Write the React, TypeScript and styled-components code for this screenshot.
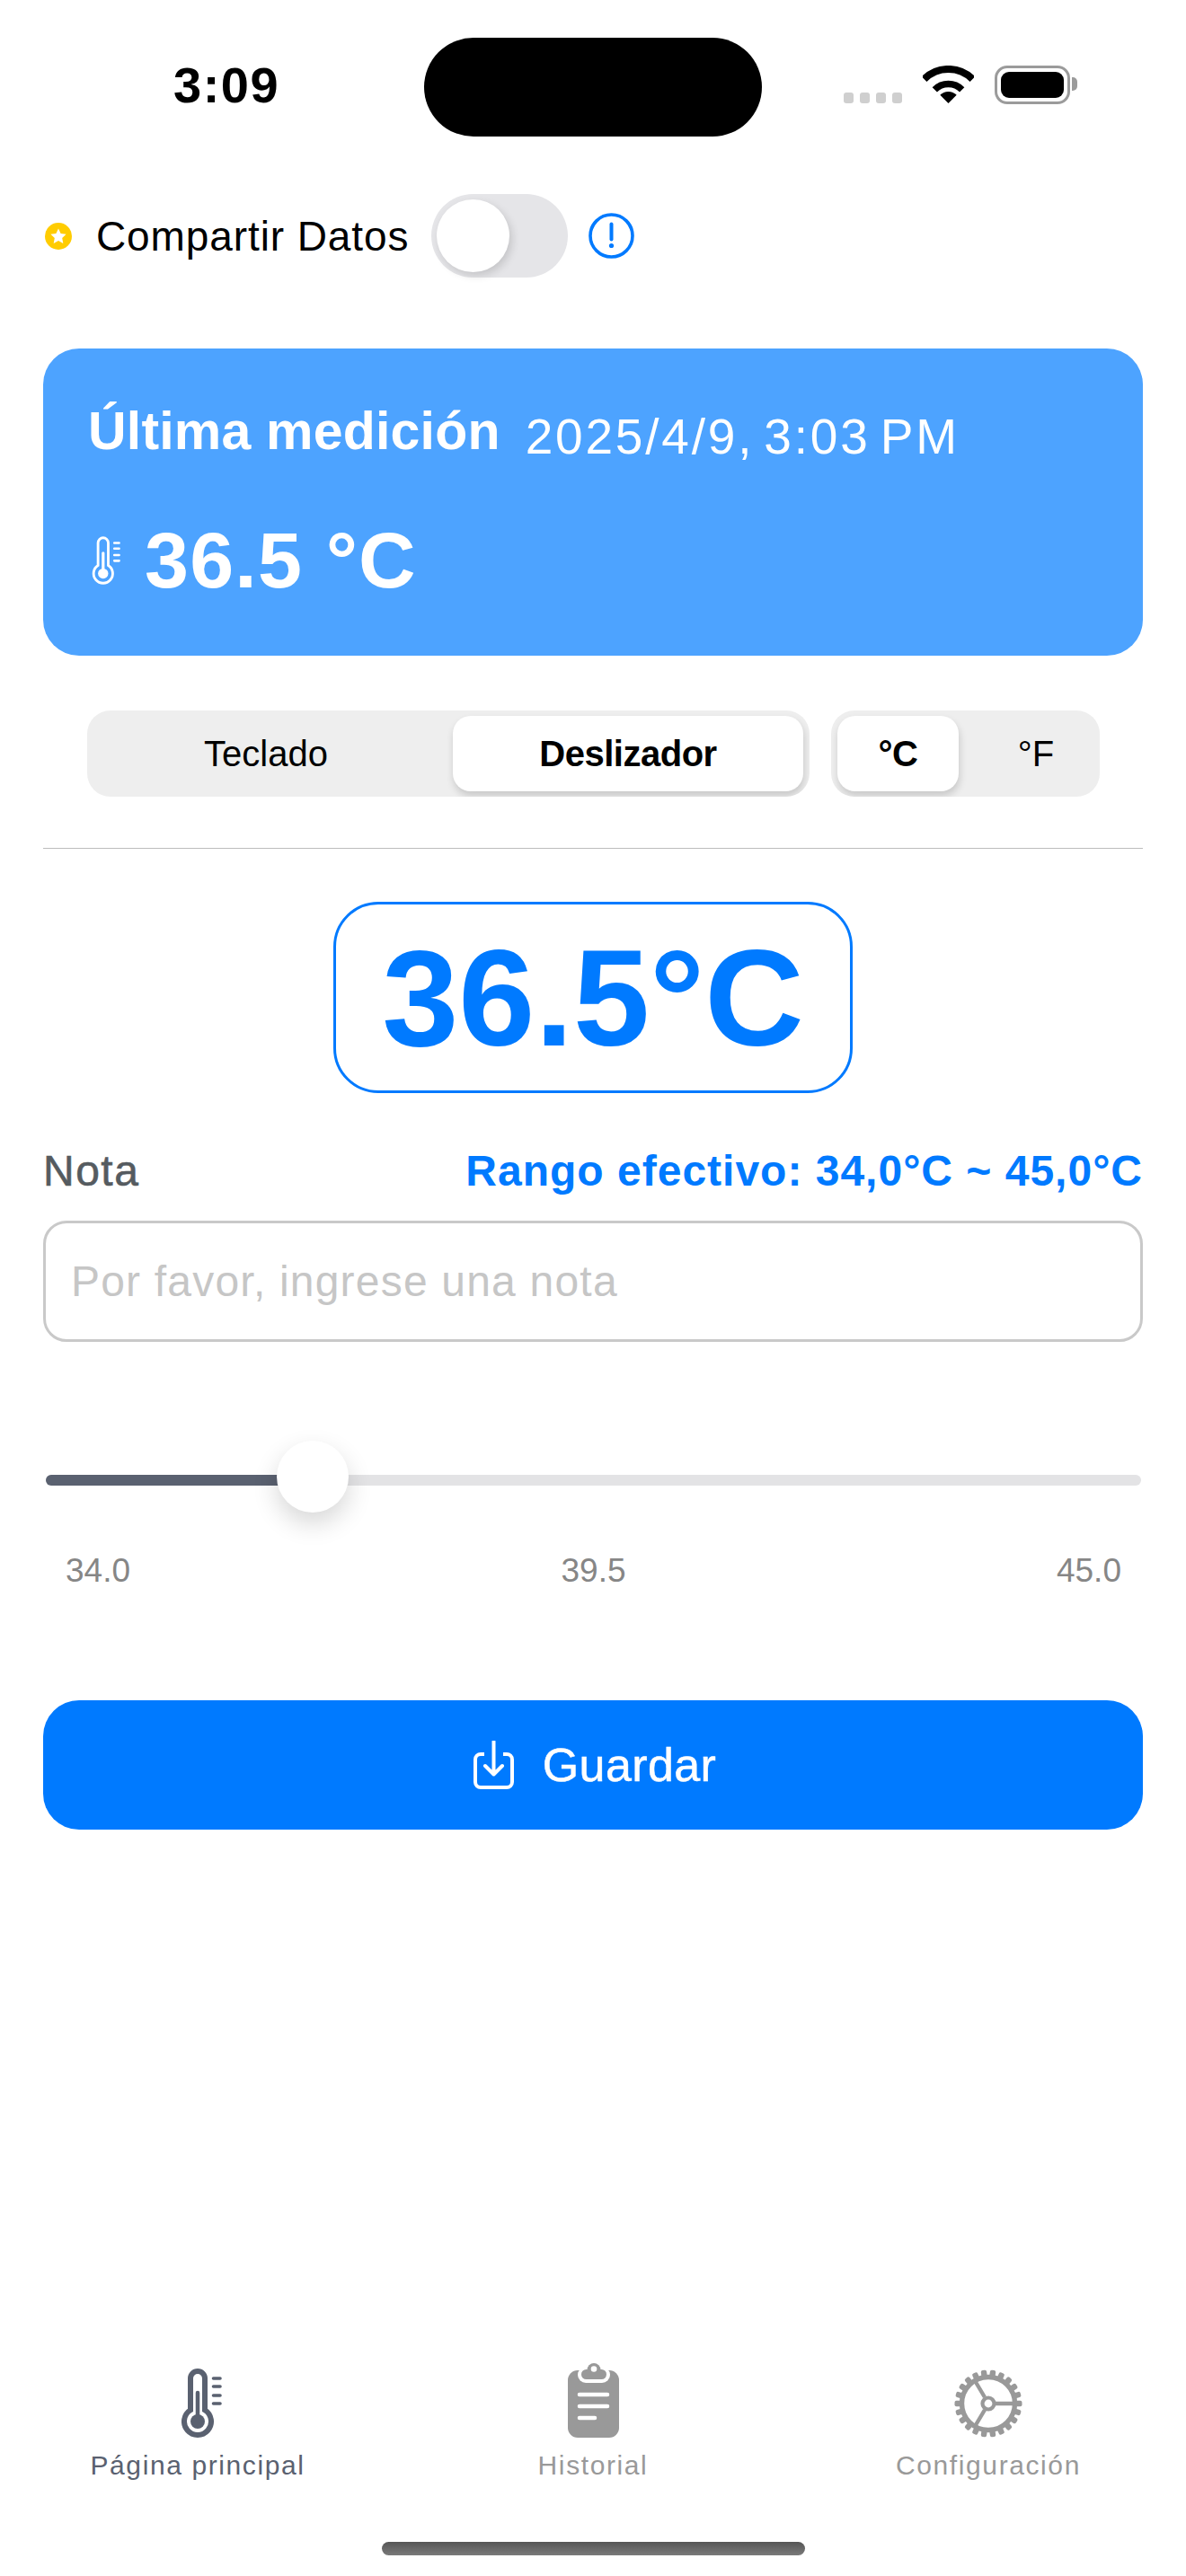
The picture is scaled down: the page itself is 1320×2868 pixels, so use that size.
import React from "react";
import { createGlobalStyle, styled } from "styled-components";

const GlobalStyle = createGlobalStyle`
  html, body {
    margin: 0;
    padding: 0;
    background: #fff;
    font-family: "Liberation Sans", Arial, sans-serif;
  }
  * { box-sizing: border-box; }
`;

const Page = styled.div`
  width: 1320px;
  height: 2868px;
  display: flex;
  flex-direction: column;
  overflow: hidden;
  background: #fff;
`;

const StatusBar = styled.div`
  height: 216px;
  padding: 42px 0 0 193px;
  display: flex;
  align-items: flex-start;
`;

const Time = styled.div`
  width: 116px;
  margin-top: 25px;
  font-size: 56px;
  line-height: 56px;
  font-weight: 700;
  letter-spacing: 1.5px;
  color: #000;
`;

const Island = styled.div`
  width: 376px;
  height: 110px;
  margin-left: 163px;
  border-radius: 55px;
  background: #000;
`;

const Dots = styled.div`
  margin: 61px 0 0 91px;
  display: flex;
  gap: 7px;
`;

const Dot = styled.span`
  width: 11px;
  height: 12px;
  border-radius: 3px;
  background: #cfcfcf;
`;

const WifiIcon = styled.svg`
  margin: 31px 0 0 23px;
`;

const Battery = styled.div`
  position: relative;
  width: 84px;
  height: 43px;
  margin: 31px 0 0 23px;
  padding: 4px;
  border: 3px solid #9b9b9b;
  border-radius: 14px;

  &::after {
    content: "";
    position: absolute;
    top: 10px;
    right: -11px;
    width: 6px;
    height: 15px;
    border-radius: 0 5px 5px 0;
    background: #9b9b9b;
  }
`;

const BatteryFill = styled.div`
  height: 100%;
  border-radius: 9px;
  background: #000;
`;

const Content = styled.div`
  padding: 0 48px;
  display: flex;
  flex-direction: column;
`;

const ShareRow = styled.div`
  height: 93px;
  display: flex;
  align-items: center;
`;

const StarIcon = styled.svg`
  margin: 0 27px 0 2px;
`;

const ShareLabel = styled.span`
  font-size: 46px;
  color: #000;
  letter-spacing: 0.9px;
`;

const SwitchTrack = styled.div`
  width: 152px;
  height: 93px;
  margin-left: 25px;
  padding: 6px;
  border-radius: 47px;
  background: #e5e5e8;
`;

const SwitchThumb = styled.div`
  width: 81px;
  height: 81px;
  border-radius: 50%;
  background: #fff;
  box-shadow: 3px 4px 10px rgba(0, 0, 0, 0.14);
`;

const InfoIcon = styled.svg`
  margin-left: 23px;
`;

const Card = styled.div`
  height: 342px;
  margin-top: 79px;
  padding: 0 50px;
  border-radius: 40px;
  background: #4da3ff;
  color: #fff;
`;

const CardHead = styled.div`
  height: 125px;
  display: flex;
  align-items: flex-start;
`;

const CardTitle = styled.span`
  margin-top: 59px;
  font-size: 59px;
  line-height: 66px;
  font-weight: 700;
  letter-spacing: 0.2px;
`;

const CardDate = styled.span`
  margin: 65px 0 0 28px;
  font-size: 55px;
  line-height: 66px;
  letter-spacing: 2.8px;
  word-spacing: -7px;
`;

const CardTemp = styled.div`
  margin: 66px 0 0 4px;
  display: flex;
  align-items: center;
  gap: 27px;
  font-size: 88px;
  line-height: 90px;
  font-weight: 700;
  letter-spacing: 1.2px;
`;

const Selectors = styled.div`
  height: 96px;
  margin: 61px 0 0 49px;
  display: flex;
  gap: 24px;
`;

const Segmented = styled.div<{ $width: number }>`
  width: ${(p) => p.$width}px;
  padding: 6px 7px;
  display: flex;
  justify-content: space-between;
  overflow: hidden;
  border-radius: 26px;
  background: #eeeeee;
`;

const Segment = styled.div<{ $active?: boolean; $width: number }>`
  flex-shrink: 0;
  width: ${(p) => p.$width}px;
  display: flex;
  align-items: center;
  justify-content: center;
  border-radius: 20px;
  font-size: 40px;
  font-weight: ${(p) => (p.$active ? 700 : 400)};
  letter-spacing: ${(p) => (p.$active ? "-0.5px" : "0")};
  color: #000;
  background: ${(p) => (p.$active ? "#fff" : "transparent")};
  box-shadow: ${(p) => (p.$active ? "1px 5px 8px rgba(0, 0, 0, 0.16)" : "none")};
`;

const Divider = styled.div`
  height: 1px;
  margin-top: 57px;
  background: #bdbdbd;
`;

const ValueBox = styled.div`
  width: 578px;
  height: 213px;
  margin: 59px auto 0;
  display: flex;
  align-items: center;
  justify-content: center;
  border: 3px solid #007aff;
  border-radius: 50px;
  font-size: 153px;
  font-weight: 700;
  color: #007aff;
`;

const NoteRow = styled.div`
  height: 60px;
  margin-top: 56px;
  display: flex;
  align-items: center;
  justify-content: space-between;
`;

const NoteLabel = styled.span`
  font-size: 48px;
  letter-spacing: 1.5px;
  color: #555b60;
  -webkit-text-stroke: 0.6px #555b60;
`;

const RangeLabel = styled.span`
  font-size: 48px;
  font-weight: 700;
  letter-spacing: 1px;
  color: #007aff;
`;

const NoteInput = styled.input`
  display: block;
  width: 100%;
  height: 135px;
  margin-top: 26px;
  padding: 0 28px;
  border: 3px solid #c9c9c9;
  border-radius: 26px;
  outline: none;
  background: #fff;
  font-family: inherit;
  font-size: 48px;
  letter-spacing: 1.2px;

  &::placeholder {
    color: #c6c6c6;
    opacity: 1;
  }
`;

const SliderArea = styled.div`
  position: relative;
  height: 12px;
  margin: 148px 2px 0 3px;
  border-radius: 6px;
  background: #e3e3e5;
`;

const SliderFill = styled.div`
  height: 100%;
  border-radius: 6px 0 0 6px;
  background: #5a6170;
`;

const SliderThumb = styled.div`
  position: absolute;
  top: -38px;
  width: 80px;
  height: 80px;
  border-radius: 50%;
  background: #fff;
  box-shadow: 0 12px 28px rgba(0, 0, 0, 0.16);
`;

const SliderLabels = styled.div`
  height: 42px;
  margin-top: 74px;
  padding: 0 24px 0 25px;
  display: flex;
  align-items: center;
  justify-content: space-between;
  font-size: 37px;
  color: #868686;
`;

const SaveButton = styled.div`
  height: 144px;
  margin-top: 123px;
  padding-left: 4px;
  display: flex;
  align-items: center;
  justify-content: center;
  gap: 32px;
  border-radius: 40px;
  background: #007aff;
  font-size: 52px;
  letter-spacing: 0.4px;
  color: #fff;
  -webkit-text-stroke: 0.5px #fff;
`;

const TabBar = styled.div`
  margin-top: auto;
  display: grid;
  grid-template-columns: repeat(3, 440px);
`;

const Tab = styled.div<{ $active?: boolean }>`
  display: flex;
  flex-direction: column;
  align-items: center;
  color: ${(p) => (p.$active ? "#5a6170" : "#999999")};
`;

const TabIcon = styled.div<{ $shift?: number }>`
  height: 84px;
  margin-left: ${(p) => p.$shift ?? 0}px;
  display: flex;
  align-items: flex-end;
`;

const TabLabel = styled.span`
  margin-top: 13px;
  font-size: 30px;
  line-height: 36px;
  letter-spacing: 1.6px;
`;

const HomeRow = styled.div`
  height: 105px;
  padding-top: 67px;
  display: flex;
  justify-content: center;
`;

const HomeBar = styled.div`
  width: 471px;
  height: 15px;
  border-radius: 8px;
  background: linear-gradient(#555555, #7a7a7a);
`;

const Thermometer: React.FC<{ width: number; height: number; strokeWidth: number }> = ({
  width,
  height,
  strokeWidth,
}) => (
  <svg width={width} height={height} viewBox="0 0 45 77" fill="none" stroke="currentColor">
    <path
      d="M10 46.3V11a8 8 0 0 1 16 0v35.3a15 15 0 1 1-16 0Z"
      strokeWidth={strokeWidth}
    />
    <path d="M18 27v32" strokeWidth={4.5} strokeLinecap="round" />
    <circle cx="18" cy="59" r="8" fill="currentColor" stroke="none" />
    <path d="M35.5 11H43M35.5 20H43M35.5 30H43M35.5 39H43" strokeWidth={3.6} strokeLinecap="round" />
  </svg>
);

const Clipboard: React.FC = () => (
  <svg width="57" height="83" viewBox="0 0 57 83" fill="currentColor">
    <rect y="8" width="57" height="75" rx="11" />
    <rect x="11" y="4" width="36" height="18" rx="9" fill="#fff" />
    <circle cx="29" cy="7.5" r="7.5" />
    <rect x="15" y="7" width="28" height="11" rx="5.5" />
    <circle cx="29" cy="6.5" r="3.3" fill="#fff" />
    <g stroke="#fff" strokeWidth="4.6" strokeLinecap="round">
      <path d="M13 35h31M13 48h31M13 61h17" />
    </g>
  </svg>
);

const GEAR_TEETH = Array.from({ length: 22 }, (_, i) => (i * 360) / 22);

const Gear: React.FC = () => (
  <svg width="76" height="76" viewBox="-38 -38 76 76" fill="none" stroke="currentColor">
    <circle r="29.5" strokeWidth="5.4" />
    {GEAR_TEETH.map((angle) => (
      <rect
        key={angle}
        x="29"
        y="-3.2"
        width="8.5"
        height="6.4"
        rx="2"
        fill="currentColor"
        stroke="none"
        transform={`rotate(${angle})`}
      />
    ))}
    <circle r="6.5" strokeWidth="4.2" />
    <path d="M8 0H29M-4 -7L-15 -25.5M-4 7L-15 25.5" strokeWidth="4.4" />
  </svg>
);

const App: React.FC = () => {
  return (
    <Page>
      <GlobalStyle />
      <StatusBar>
        <Time>3:09</Time>
        <Island />
        <Dots>
          <Dot />
          <Dot />
          <Dot />
          <Dot />
        </Dots>
        <WifiIcon width="57" height="42" viewBox="0 0 57 42" fill="none" stroke="#000">
          <path d="M1.6 15.1A38 38 0 0 1 55.4 15.1" strokeWidth="8" />
          <path d="M13.3 26.8A21.5 21.5 0 0 1 43.7 26.8" strokeWidth="7.5" />
          <path d="M28.5 42L19.3 32.8A13 13 0 0 1 37.7 32.8Z" fill="#000" stroke="none" />
        </WifiIcon>
        <Battery>
          <BatteryFill />
        </Battery>
      </StatusBar>

      <Content>
        <ShareRow>
          <StarIcon width="30" height="30" viewBox="0 0 30 30">
            <circle cx="15" cy="15" r="15" fill="#ffcc00" />
            <path
              d="M15 6.5l2.6 5.5 6 .8-4.4 4.1 1.1 6-5.3-2.9-5.3 2.9 1.1-6-4.4-4.1 6-.8Z"
              fill="#fff"
            />
          </StarIcon>
          <ShareLabel>Compartir Datos</ShareLabel>
          <SwitchTrack>
            <SwitchThumb />
          </SwitchTrack>
          <InfoIcon width="51" height="51" viewBox="0 0 51 51">
            <circle cx="25.5" cy="25.5" r="23.5" fill="none" stroke="#007aff" strokeWidth="3.6" />
            <path d="M25.5 12.5v17" stroke="#007aff" strokeWidth="4" strokeLinecap="round" />
            <circle cx="25.5" cy="36.5" r="2.6" fill="#007aff" />
          </InfoIcon>
        </ShareRow>

        <Card>
          <CardHead>
            <CardTitle>Última medición</CardTitle>
            <CardDate>2025/4/9, 3:03 PM</CardDate>
          </CardHead>
          <CardTemp>
            <Thermometer width={32} height={56} strokeWidth={4} />
            <span>36.5 °C</span>
          </CardTemp>
        </Card>

        <Selectors>
          <Segmented $width={804}>
            <Segment $width={384}>Teclado</Segment>
            <Segment $active $width={390}>
              Deslizador
            </Segment>
          </Segmented>
          <Segmented $width={299}>
            <Segment $active $width={135}>
              °C
            </Segment>
            <Segment $width={172}>°F</Segment>
          </Segmented>
        </Selectors>

        <Divider />

        <ValueBox>36.5°C</ValueBox>

        <NoteRow>
          <NoteLabel>Nota</NoteLabel>
          <RangeLabel>Rango efectivo: 34,0°C ~ 45,0°C</RangeLabel>
        </NoteRow>
        <NoteInput placeholder="Por favor, ingrese una nota" readOnly />

        <SliderArea>
          <SliderFill style={{ width: "21.6%" }} />
          <SliderThumb style={{ left: "21.1%" }} />
        </SliderArea>
        <SliderLabels>
          <span>34.0</span>
          <span>39.5</span>
          <span>45.0</span>
        </SliderLabels>

        <SaveButton>
          <svg width="45" height="54" viewBox="0 0 45 54" fill="none" stroke="#fff" strokeWidth="4">
            <path d="M12 15H8a6 6 0 0 0-6 6v25a6 6 0 0 0 6 6h29a6 6 0 0 0 6-6V21a6 6 0 0 0-6-6h-4" />
            <path d="M22.5 1v36M13 28l9.5 9.5L32 28" strokeLinecap="round" strokeLinejoin="round" />
          </svg>
          <span>Guardar</span>
        </SaveButton>
      </Content>

      <TabBar>
        <Tab $active>
          <TabIcon $shift={9}>
            <Thermometer width={45} height={77} strokeWidth={6} />
          </TabIcon>
          <TabLabel>Página principal</TabLabel>
        </Tab>
        <Tab>
          <TabIcon>
            <Clipboard />
          </TabIcon>
          <TabLabel>Historial</TabLabel>
        </Tab>
        <Tab>
          <TabIcon>
            <Gear />
          </TabIcon>
          <TabLabel>Configuración</TabLabel>
        </Tab>
      </TabBar>
      <HomeRow>
        <HomeBar />
      </HomeRow>
    </Page>
  );
};

export default App;
